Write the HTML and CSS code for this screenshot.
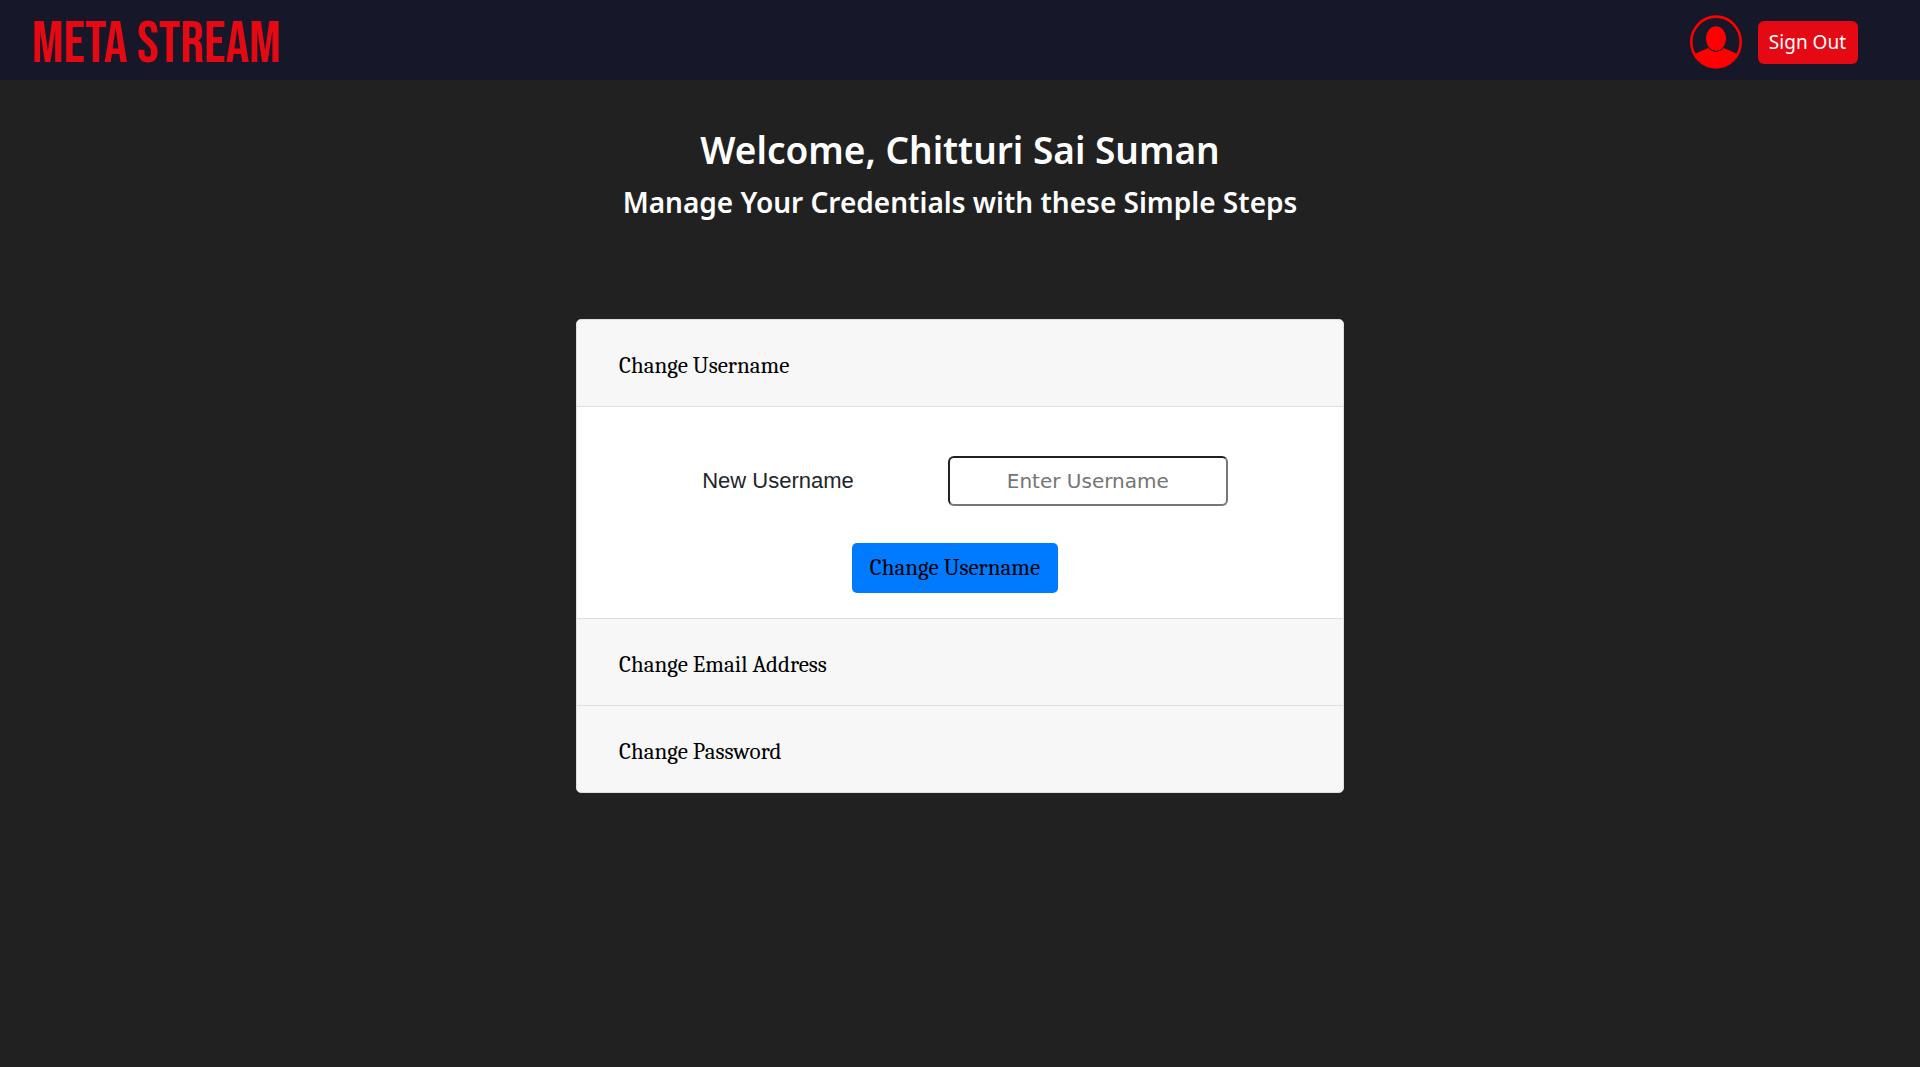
FILE: index.html
```html
<!DOCTYPE html>
<html lang="en">
<head>
  <meta charset="utf-8">
  <meta name="viewport" content="width=device-width, initial-scale=1">
  <title>Meta Stream</title>
  <link rel="stylesheet" href="styles.css">
</head>
<body>
  <header class="navbar">
    <a class="brand" href="#">META STREAM</a>
    <div class="account">
      <a class="profile" href="#" aria-label="Profile">
        <svg class="avatar" viewBox="0 0 52 54" aria-hidden="true">
          <defs>
            <clipPath id="disc"><ellipse cx="26" cy="27" rx="25" ry="26"/></clipPath>
          </defs>
          <ellipse cx="26" cy="27" rx="24.700" ry="25.400" fill="none" stroke="#f00" stroke-width="2.600"/>
          <path clip-path="url(#disc)" fill="#f00" d="M0 43 C6 37 12 36 18 33 C22 37.500 30 37.500 34 33 C40 36 46 37 52 43 V54 H0Z"/>
          <ellipse cx="26" cy="23.500" rx="10.500" ry="12.800" fill="#f00" stroke="#161728"/>
        </svg>
      </a>
      <button class="sign-out" type="button">Sign Out</button>
    </div>
  </header>

  <main class="page">
    <h1 class="welcome">Welcome, Chitturi Sai Suman</h1>
    <h2 class="subtitle">Manage Your Credentials with these Simple Steps</h2>

    <div class="accordion">
      <section class="panel">
        <button class="panel-header" type="button" aria-expanded="true">Change Username</button>
        <form class="panel-body">
          <div class="field">
            <label class="field-label" for="username">New Username</label>
            <input class="field-input" id="username" type="text" placeholder="Enter Username">
          </div>
          <button class="submit" type="button">Change Username</button>
        </form>
      </section>
      <section class="panel">
        <button class="panel-header" type="button" aria-expanded="false">Change Email Address</button>
      </section>
      <section class="panel">
        <button class="panel-header" type="button" aria-expanded="false">Change Password</button>
      </section>
    </div>
  </main>
</body>
</html>
```
FILE: styles.css
```css
* {
  box-sizing: border-box;
}

body {
  margin: 0;
  min-height: 100vh;
  background: #212121;
  color: #fff;
  font-family: "Segoe UI", "Noto Sans", sans-serif;
}

button,
input {
  margin: 0;
  font: inherit;
}

.navbar {
  display: flex;
  align-items: center;
  justify-content: space-between;
  min-height: 80px;
  padding: 4px 62px 0 32px;
  background: #161728;
}

.brand {
  padding-top: 6px;
  color: #e50914;
  font-family: "Bebas Neue", "Liberation Sans Narrow", "Liberation Sans", sans-serif;
  font-size: 59px;
  font-weight: 400;
  line-height: 70px;
  text-decoration: none;
}

.account {
  display: flex;
  align-items: center;
  gap: 16px;
}

.profile,
.avatar {
  display: block;
}

.avatar {
  width: 52px;
  height: 54px;
}

.sign-out {
  padding: 8px 12px 8px 11px;
  border: 0;
  border-radius: 6px;
  background: #e50914;
  color: #fff;
  font-size: 19px;
  line-height: 27px;
}

.page {
  display: flex;
  flex-direction: column;
  align-items: center;
  padding: 46px 0;
}

.welcome,
.subtitle {
  margin: 0;
  font-weight: 600;
  text-align: center;
}

.welcome {
  margin-bottom: 10px;
  font-size: 37px;
  line-height: 48px;
}

.subtitle {
  font-size: 28px;
  line-height: 36px;
}

.accordion {
  width: 40%;
  min-width: 600px;
  margin-top: 99px;
  overflow: hidden;
  border: 1px solid #dfdfdf;
  border-radius: 5px;
  background: #fff;
}

.panel + .panel {
  border-top: 1px solid #dfdfdf;
}

.panel-header {
  display: block;
  width: 100%;
  padding: 30px 42px 24px;
  border: 0;
  background: #f7f7f7;
  color: #000;
  font-family: Cambria, Caladea, "Liberation Serif", serif;
  font-size: 23px;
  line-height: 32px;
  text-align: left;
}

.panel-body {
  display: flex;
  flex-direction: column;
  align-items: center;
  gap: 37px;
  padding: 49px 10px 25px 0;
  border-top: 1px solid #dfdfdf;
}

.field {
  display: flex;
  align-items: center;
  gap: 94px;
  padding-left: 20px;
}

.field-label {
  color: #212529;
  font-family: Arial, "Liberation Sans", sans-serif;
  font-size: 22px;
}

.field-input {
  width: 280px;
  height: 50px;
  border: 2px inset #767676;
  border-radius: 6px;
  background: #fff;
  color: #000;
  font-family: "DejaVu Sans", sans-serif;
  font-size: 20px;
  text-align: center;
}

.field-input::placeholder {
  color: #757575;
}

.submit {
  padding: 9px 18px;
  border: 0;
  border-radius: 5px;
  background: #007bff;
  color: #000;
  font-family: Cambria, Caladea, "Liberation Serif", serif;
  font-size: 23px;
  line-height: 32px;
}
```
